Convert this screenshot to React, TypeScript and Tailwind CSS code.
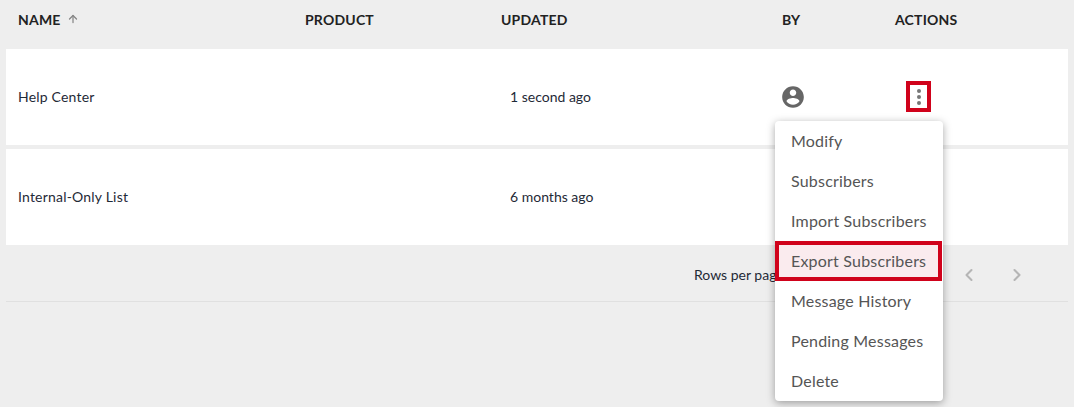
import React from 'react';
import { ArrowUp, ChevronLeft, ChevronRight } from 'lucide-react';

const headers = ['PRODUCT', 'UPDATED', 'BY', 'ACTIONS'];
const gridCols = 'grid grid-cols-[287px_196px_281px_113px_1fr]';

const menuItems = [
  'Modify',
  'Subscribers',
  'Import Subscribers',
  'Export Subscribers',
  'Message History',
  'Pending Messages',
  'Delete'
];

const UserIcon = () => (
  <svg width="26" height="26" viewBox="0 0 24 24" fill="#666666" className="-ml-[2px]">
    <path d="M12 2C6.48 2 2 6.48 2 12s4.48 10 10 10 10-4.48 10-10S17.52 2 12 2zm0 3c1.66 0 3 1.34 3 3s-1.34 3-3 3-3-1.34-3-3 1.34-3 3-3zm0 14.2c-2.5 0-4.71-1.28-6-3.22.03-1.99 4-3.08 6-3.08 1.99 0 5.97 1.09 6 3.08-1.29 1.94-3.5 3.22-6 3.22z" />
  </svg>
);

const Kebab = () => (
  <div className="-mt-px flex h-[31px] w-[25px] flex-col items-center justify-center gap-[2px] border-4 border-[#d0021b] bg-white">
    <span className="h-1 w-1 rounded-full bg-[#777777]" />
    <span className="h-1 w-1 rounded-full bg-[#777777]" />
    <span className="h-1 w-1 rounded-full bg-[#777777]" />
  </div>
);

const App: React.FC = () => {
  return (
    <div className="relative h-[407px] w-[1074px] overflow-hidden bg-[#eeeeee] px-[6px] font-['Lato',sans-serif] text-[14px] text-[#1f2a37]">
      <div className={`${gridCols} h-[49px] items-center pb-[11px] pl-3 text-[14px] font-bold tracking-[0.2px] text-[#222222]`}>
        <div className="flex items-center gap-[6px]">
          NAME
          <ArrowUp size={12} strokeWidth={2.5} className="text-[#858585]" />
        </div>
        {headers.map(h => (
          <div key={h}>{h}</div>
        ))}
      </div>

      <div className="flex flex-col gap-1">
        <div className={`${gridCols} h-[96px] items-center bg-white pl-3`}>
          <div className="pb-[2px] tracking-[0.2px]">Help Center</div>
          <div />
          <div className="pb-[2px] pl-[9px]">1 second ago</div>
          <div className="flex"><UserIcon /></div>
          <div className="pl-[11px]"><Kebab /></div>
        </div>
        <div className={`${gridCols} h-[96px] items-center bg-white pl-3`}>
          <div className="pb-[2px] tracking-[0.2px]">Internal-Only List</div>
          <div />
          <div className="pb-[2px] pl-[9px]">6 months ago</div>
        </div>
      </div>

      <div className="flex h-[57px] items-center border-b border-[#e0e0e0] pt-[3px]">
        <span className="ml-[688px]">Rows per page</span>
        <ChevronLeft size={20} strokeWidth={2.5} className="ml-auto mr-[28px] text-[#b5b5b5]" />
        <ChevronRight size={20} strokeWidth={2.5} className="mr-[41px] text-[#b5b5b5]" />
      </div>

      <div className="absolute left-[775px] top-[121px] flex w-[168px] flex-col rounded bg-white text-[16px] tracking-[0.2px] text-[#555555] shadow-[0_2px_8px_rgba(0,0,0,0.35)]">
        {menuItems.map(item => (
          <div
            key={item}
            className={
              item === 'Export Subscribers'
                ? 'flex h-10 w-[167px] items-center border-4 border-[#d0021b] bg-[#faebee] pl-3'
                : 'flex h-10 items-center pl-4'
            }
          >
            {item}
          </div>
        ))}
      </div>
    </div>
  );
};

export default App;
